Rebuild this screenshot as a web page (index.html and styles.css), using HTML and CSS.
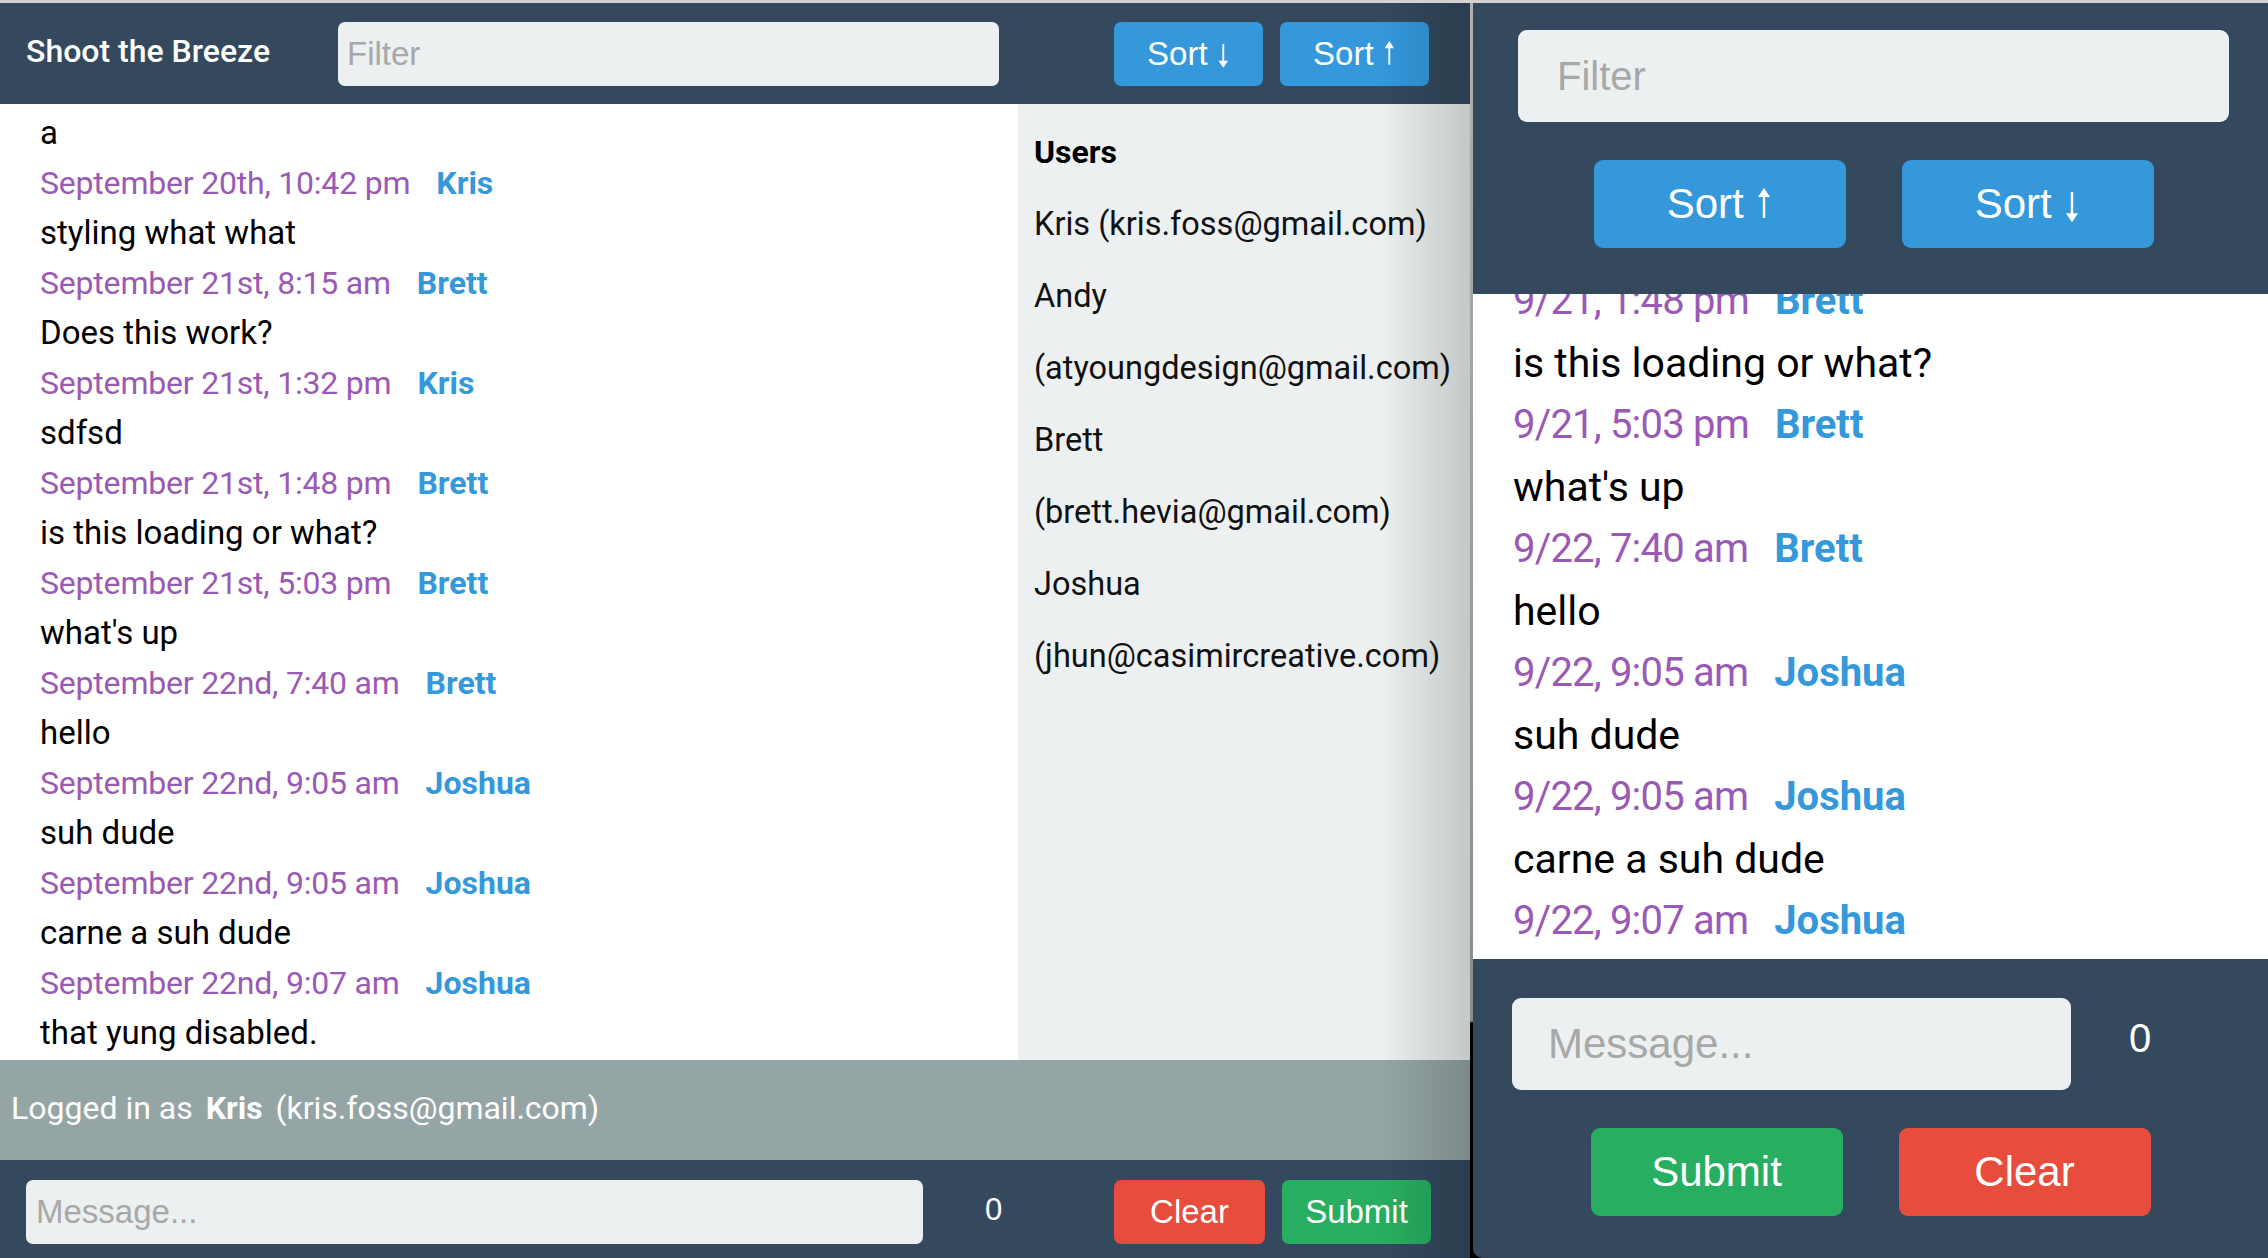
FILE: index.html
```html
<!DOCTYPE html>
<html lang="en">
<head>
<meta charset="utf-8">
<title>Shoot the Breeze</title>
<link rel="stylesheet" href="styles.css">
</head>
<body>
<div class="topline"></div>
<div class="screens">
  <section class="desktop">
    <header class="d-header">
      <h1 class="title">Shoot the Breeze</h1>
      <input class="d-filter" type="text" placeholder="Filter">
      <div class="d-sorts">
        <button class="btn blue d-btn">Sort <svg class="arrow down" viewBox="0 0 12 30" aria-hidden="true"><path d="M4.8 0h2.4v21H12L6 30 0 21h4.8z"/></svg></button>
        <button class="btn blue d-btn">Sort <svg class="arrow" viewBox="0 0 12 30" aria-hidden="true"><path d="M6 0l6 9H7.2v21H4.8V9H0z"/></svg></button>
      </div>
    </header>
    <main class="d-main">
      <ul class="feed d-feed">
        <li class="msg"><p class="body">a</p></li>
        <li class="msg"><div class="meta"><span class="time">September 20th, 10:42 pm</span><span class="author">Kris</span></div><p class="body">styling what what</p></li>
        <li class="msg"><div class="meta"><span class="time">September 21st, 8:15 am</span><span class="author">Brett</span></div><p class="body">Does this work?</p></li>
        <li class="msg"><div class="meta"><span class="time">September 21st, 1:32 pm</span><span class="author">Kris</span></div><p class="body">sdfsd</p></li>
        <li class="msg"><div class="meta"><span class="time">September 21st, 1:48 pm</span><span class="author">Brett</span></div><p class="body">is this loading or what?</p></li>
        <li class="msg"><div class="meta"><span class="time">September 21st, 5:03 pm</span><span class="author">Brett</span></div><p class="body">what's up</p></li>
        <li class="msg"><div class="meta"><span class="time">September 22nd, 7:40 am</span><span class="author">Brett</span></div><p class="body">hello</p></li>
        <li class="msg"><div class="meta"><span class="time">September 22nd, 9:05 am</span><span class="author">Joshua</span></div><p class="body">suh dude</p></li>
        <li class="msg"><div class="meta"><span class="time">September 22nd, 9:05 am</span><span class="author">Joshua</span></div><p class="body">carne a suh dude</p></li>
        <li class="msg"><div class="meta"><span class="time">September 22nd, 9:07 am</span><span class="author">Joshua</span></div><p class="body">that yung disabled.</p></li>
      </ul>
      <aside class="users">
        <h2 class="users-title">Users</h2>
        <ul class="users-list">
          <li>Kris (kris.foss@gmail.com)</li>
          <li>Andy (atyoungdesign@gmail.com)</li>
          <li>Brett (brett.hevia@gmail.com)</li>
          <li>Joshua (jhun@casimircreative.com)</li>
        </ul>
      </aside>
    </main>
    <div class="status">Logged in as <strong class="me">Kris</strong> (kris.foss@gmail.com)</div>
    <footer class="d-composer">
      <input class="d-message" type="text" placeholder="Message...">
      <span class="count d-count">0</span>
      <div class="d-actions">
        <button class="btn red d-btn d-clear">Clear</button>
        <button class="btn green d-btn">Submit</button>
      </div>
    </footer>
  </section>
  <div class="divider"></div>
  <section class="mobile">
    <header class="m-header">
      <input class="m-filter" type="text" placeholder="Filter">
      <div class="m-row">
        <button class="btn blue m-btn">Sort <svg class="arrow" viewBox="0 0 12 30" aria-hidden="true"><path d="M6 0l6 9H7.2v21H4.8V9H0z"/></svg></button>
        <button class="btn blue m-btn">Sort <svg class="arrow down" viewBox="0 0 12 30" aria-hidden="true"><path d="M4.8 0h2.4v21H12L6 30 0 21h4.8z"/></svg></button>
      </div>
    </header>
    <div class="m-feedwrap">
      <ul class="feed m-feed">
        <li class="msg"><div class="meta"><span class="time">9/21, 1:48 pm</span><span class="author">Brett</span></div><p class="body">is this loading or what?</p></li>
        <li class="msg"><div class="meta"><span class="time">9/21, 5:03 pm</span><span class="author">Brett</span></div><p class="body">what's up</p></li>
        <li class="msg"><div class="meta"><span class="time">9/22, 7:40 am</span><span class="author">Brett</span></div><p class="body">hello</p></li>
        <li class="msg"><div class="meta"><span class="time">9/22, 9:05 am</span><span class="author">Joshua</span></div><p class="body">suh dude</p></li>
        <li class="msg"><div class="meta"><span class="time">9/22, 9:05 am</span><span class="author">Joshua</span></div><p class="body">carne a suh dude</p></li>
        <li class="msg"><div class="meta"><span class="time">9/22, 9:07 am</span><span class="author">Joshua</span></div></li>
      </ul>
    </div>
    <footer class="m-composer">
      <div class="m-inputrow">
        <input class="m-message" type="text" placeholder="Message...">
        <span class="count m-count">0</span>
      </div>
      <div class="m-row m-actions">
        <button class="btn green m-btn">Submit</button>
        <button class="btn red m-btn">Clear</button>
      </div>
    </footer>
  </section>
</div>
</body>
</html>
```

FILE: styles.css
```css
* { box-sizing: border-box; }
html, body { margin: 0; padding: 0; }
body {
  width: 2268px;
  height: 1258px;
  overflow: hidden;
  background: #000;
  font-family: Roboto, "Open Sans", sans-serif;
  color: #000;
}
.topline { height: 3px; background: #d2d2d2; }
.screens { display: flex; height: 1255px; }

/* ---------- desktop window ---------- */
.desktop {
  width: 1470px;
  flex: none;
  display: flex;
  flex-direction: column;
  position: relative;
  overflow: hidden;
  background: #fff;
}
.desktop::after {
  content: "";
  position: absolute;
  top: 0; right: 0; bottom: 0;
  width: 90px;
  background: linear-gradient(to right, rgba(0,0,0,0), rgba(0,0,0,0.17));
  pointer-events: none;
}
.d-header {
  height: 101px;
  flex: none;
  background: #34495e;
  display: flex;
  align-items: center;
  padding: 0 41px 0 26px;
}
.title {
  margin: -5px 0 0;
  width: 312px;
  color: #fff;
  font-size: 32px;
  font-weight: 500;
}
input {
  border: 0;
  outline: none;
  background: #ecf0f1;
  font-family: "Liberation Sans", Arial, sans-serif;
  color: #333;
}
input::placeholder { color: #a8a8a8; }
.d-filter {
  width: 661px;
  height: 64px;
  border-radius: 7px;
  padding: 0 9px;
  font-size: 33px;
}
.d-sorts, .d-actions {
  margin-left: auto;
  display: flex;
  gap: 17px;
}
.btn {
  border: 0;
  color: #fff;
  font-family: "Liberation Sans", Arial, sans-serif;
  padding: 0;
}
.blue { background: #3498db; }
.red { background: #e74c3c; }
.green { background: #27ae60; }
.d-btn {
  width: 149px;
  height: 64px;
  border-radius: 7px;
  font-size: 33px;
}
.d-clear { width: 151px; }
.arrow {
  width: 0.38em;
  height: 0.72em;
  fill: #fff;
  vertical-align: 0;
  margin-left: 0.02em;
}
.arrow.down { vertical-align: -0.1em; }

.d-main {
  height: 956px;
  flex: none;
  display: flex;
  overflow: hidden;
}
.feed {
  list-style: none;
  margin: 0;
  padding: 0;
}
.msg p { margin: 0; }
.meta { display: flex; gap: 26px; }
.time { color: #9b59b6; }
.author { color: #3498db; font-weight: 700; }
.body { color: #000; }

.d-feed {
  width: 1018px;
  flex: none;
  padding: 4px 0 0 40px;
  overflow: hidden;
  font-size: 32px;
  line-height: 50px;
}
.d-feed .meta, .d-feed .body { height: 50px; }
.d-feed .body { font-size: 33px; }
.d-feed .time { letter-spacing: -0.2px; }

.users {
  flex: 1;
  min-width: 0;
  overflow: hidden;
  background: #ecf0f1;
  padding: 12px 8px 0 16px;
  font-size: 32.5px;
  line-height: 72px;
  color: #111;
}
.users-title {
  margin: 0;
  font-size: 32px;
  font-weight: 700;
  line-height: 72px;
  color: #000;
}
.users-list { list-style: none; margin: 0; padding: 0; }

.status {
  height: 100px;
  flex: none;
  background: #95a5a6;
  color: #fff;
  display: flex;
  align-items: center;
  padding: 0 0 5px 11px;
  font-size: 32px;
  white-space: pre;
}
.me { font-weight: 700; margin: 0 5px; }

.d-composer {
  flex: 1;
  background: #34495e;
  display: flex;
  align-items: center;
  padding: 5px 39px 0 26px;
}
.d-message {
  width: 897px;
  height: 64px;
  border-radius: 7px;
  padding: 0 10px;
  font-size: 33px;
}
.count {
  color: #fff;
  font-family: "Liberation Sans", Arial, sans-serif;
}
.d-count { margin-left: 62px; font-size: 31px; margin-top: -4px; }

/* ---------- divider ---------- */
.divider {
  width: 3px;
  flex: none;
  background: linear-gradient(#b0b0b0 0, #8c8c8c 1018px, #000 1020px);
}

/* ---------- mobile window ---------- */
.mobile {
  flex: 1;
  min-width: 0;
  display: flex;
  flex-direction: column;
  background: #34495e;
  border-bottom-left-radius: 10px;
  overflow: hidden;
}
.m-header {
  height: 291px;
  flex: none;
  background: #34495e;
  padding: 27px 39px 0 45px;
}
.m-filter {
  width: 100%;
  height: 92px;
  border-radius: 9px;
  padding: 0 39px;
  font-size: 40px;
}
.m-row {
  display: flex;
  justify-content: center;
  gap: 56px;
  margin-top: 38px;
}
.m-btn {
  width: 252px;
  height: 88px;
  border-radius: 9px;
  font-size: 42px;
}
.m-feedwrap {
  height: 665px;
  flex: none;
  background: #fff;
  overflow: hidden;
  padding-left: 40px;
}
.m-feed {
  margin-top: -24px;
  font-size: 40px;
  line-height: 62px;
}
.m-feed .meta, .m-feed .body { height: 62px; }
.m-feed .meta { gap: 26px; }
.m-feed .time { letter-spacing: -0.8px; }
.m-feed .body { font-size: 41px; }

.m-composer {
  flex: 1;
  background: #34495e;
  padding: 39px 39px 0 39px;
}
.m-inputrow { display: flex; align-items: center; }
.m-message {
  width: 559px;
  height: 92px;
  border-radius: 9px;
  padding: 0 36px;
  font-size: 42px;
}
.m-count { margin-left: 58px; font-size: 40px; margin-top: -12px; }
```
